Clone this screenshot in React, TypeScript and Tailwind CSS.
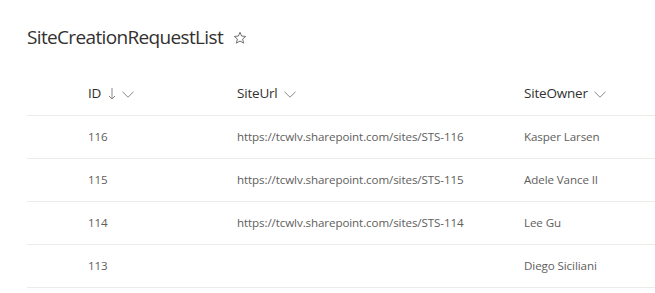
const rows = [
  { id: '116', url: 'https://tcwlv.sharepoint.com/sites/STS-116', owner: 'Kasper Larsen' },
  { id: '115', url: 'https://tcwlv.sharepoint.com/sites/STS-115', owner: 'Adele Vance II' },
  { id: '114', url: 'https://tcwlv.sharepoint.com/sites/STS-114', owner: 'Lee Gu' },
  { id: '113', url: '', owner: 'Diego Siciliani' },
];

function Chevron() {
  return (
    <svg className="ml-[6px] mt-[1px]" width="12" height="7" viewBox="0 0 12 7" fill="none">
      <path d="M0.5 0.8L6 6.2l5.5-5.4" stroke="#8a8886" strokeWidth="1" />
    </svg>
  );
}

export default function App() {
  return (
    <div className="bg-white pl-[27px] font-['Open_Sans',sans-serif] text-[#323130]">
      <div className="pt-[23px] flex h-[51px] items-center">
        <h1 className="text-[19px] leading-[28px] tracking-[-0.65px] text-[#323130]">SiteCreationRequestList</h1>
        <svg className="ml-[10px] mt-[1px]" width="14" height="14" viewBox="0 0 16 16" fill="none">
          <path
            d="M8 1.5l1.9 4.3 4.6.4-3.5 3 1.1 4.6L8 11.4l-4.1 2.4 1.1-4.6-3.5-3 4.6-.4z"
            stroke="#605e5c"
            strokeWidth="1"
            strokeLinejoin="round"
          />
        </svg>
      </div>

      <div className="mt-[21px] grid h-[44px] grid-cols-[149px_287px_1fr] items-center border-b border-[#edebe9] pl-[61px] text-[13.5px] tracking-[-0.2px]">
        <div className="flex items-center">
          <span>ID</span>
          <svg className="ml-[7px]" width="8" height="13" viewBox="0 0 8 13" fill="none">
            <path d="M4 1v11M1 9l3 3 3-3" stroke="#8a8886" strokeWidth="1" />
          </svg>
          <Chevron />
        </div>
        <div className="flex items-center">
          <span>SiteUrl</span>
          <Chevron />
        </div>
        <div className="flex items-center">
          <span>SiteOwner</span>
          <Chevron />
        </div>
      </div>

      {rows.map((r) => (
        <div
          key={r.id}
          className="grid h-[43px] grid-cols-[149px_287px_1fr] items-center border-b border-[#edebe9] pl-[61px] text-[11.6px] tracking-[-0.1px] text-[#605e5c]"
        >
          <div>{r.id}</div>
          <div>{r.url}</div>
          <div>{r.owner}</div>
        </div>
      ))}
    </div>
  );
}
